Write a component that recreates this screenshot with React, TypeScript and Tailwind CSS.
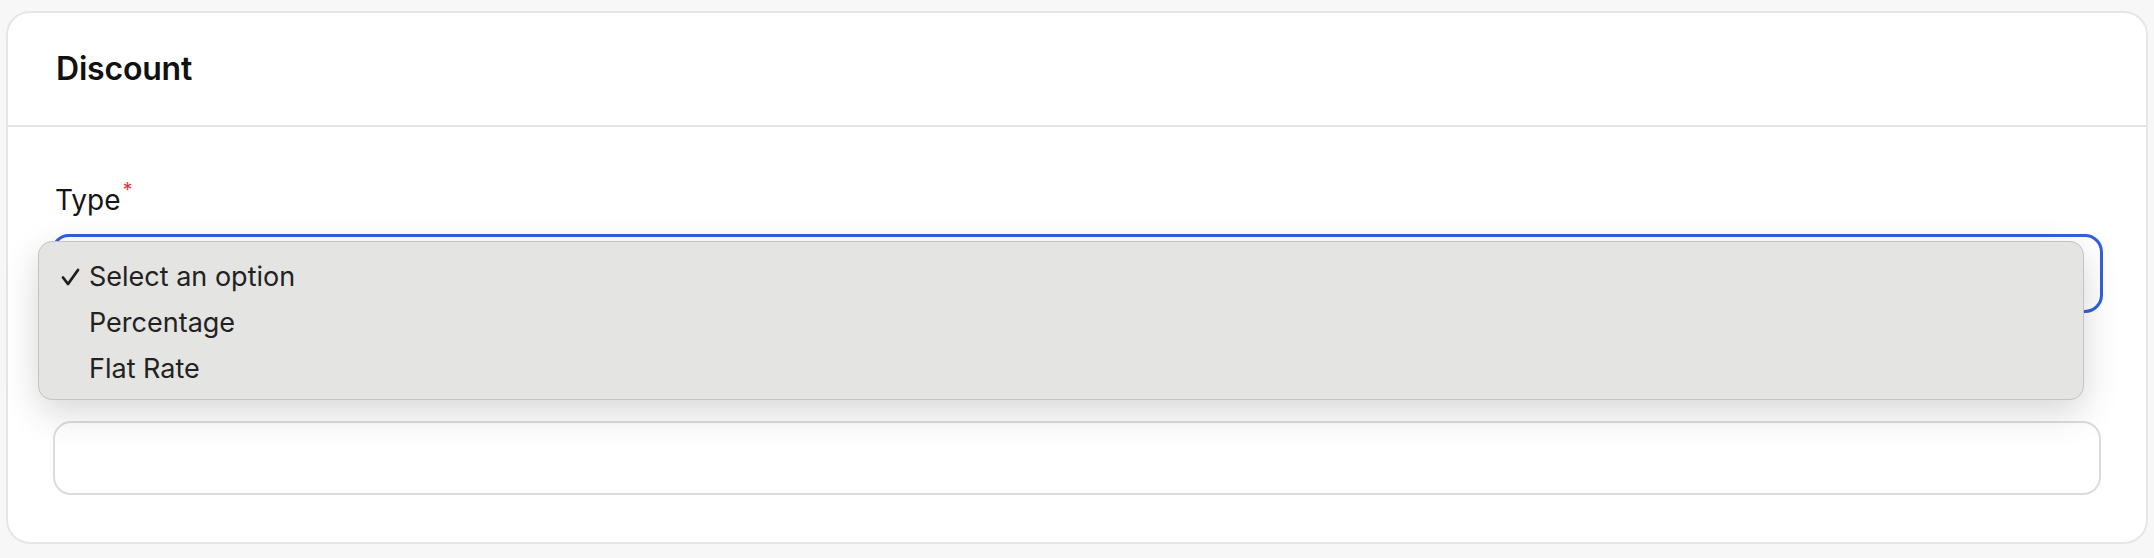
import React from 'react';

const options = ['Select an option', 'Percentage', 'Flat Rate'];

const Check = () => (
  <svg width="19" height="18" viewBox="0 0 19 18" fill="none">
    <path d="M2 9.5 L7 16 L17 2" stroke="#1f1f1f" strokeWidth="2.8" strokeLinecap="round" strokeLinejoin="round" />
  </svg>
);

export default function App() {
  return (
    <div className="min-h-[558px] bg-[#f7f7f7] px-[6px] pt-[11px] pb-[15px] font-['Inter','Liberation_Sans',sans-serif]">
      <div className="rounded-[24px] border-2 border-[#e6e6e6] bg-white">
        {/* Header */}
        <div className="flex h-[114px] items-center border-b-2 border-[#e4e4e4] px-[48px]">
          <h2 className="text-[32px] font-semibold tracking-[-0.2px] text-[#111]">Discount</h2>
        </div>

        {/* Body */}
        <div className="px-[45px] pt-[53px] pb-[47px]">
          <label className="flex items-start pl-[2px] text-[28px] leading-[40px] text-[#161616]">
            Type
            <span className="ml-[2px] text-[20px] leading-[20px] text-[#e0393e]">*</span>
          </label>

          <div className="relative mx-[-2px] mt-[14px]">
            <div className="h-[79px] rounded-[18px] border-[3px] border-[#3160dc] bg-white" />

            {/* open dropdown */}
            <div className="absolute left-[-13px] right-[19px] top-[7px] z-10 h-[159px] rounded-[14px] border border-[#c4c4c4] bg-[#e4e4e3] pt-[12px] shadow-[0_12px_36px_rgba(0,0,0,0.16)]">
              {options.map((o, i) => (
                <div key={o} className="flex items-center text-[27px] leading-[46px] text-[#222]">
                  <span className="ml-[22px] flex w-[28px] items-center">{i === 0 && <Check />}</span>
                  <span>{o}</span>
                </div>
              ))}
            </div>
          </div>

          <div className="mt-[108px] h-[74px] rounded-[18px] border-2 border-[#dcdcdc] bg-white" />
        </div>
      </div>
    </div>
  );
}
